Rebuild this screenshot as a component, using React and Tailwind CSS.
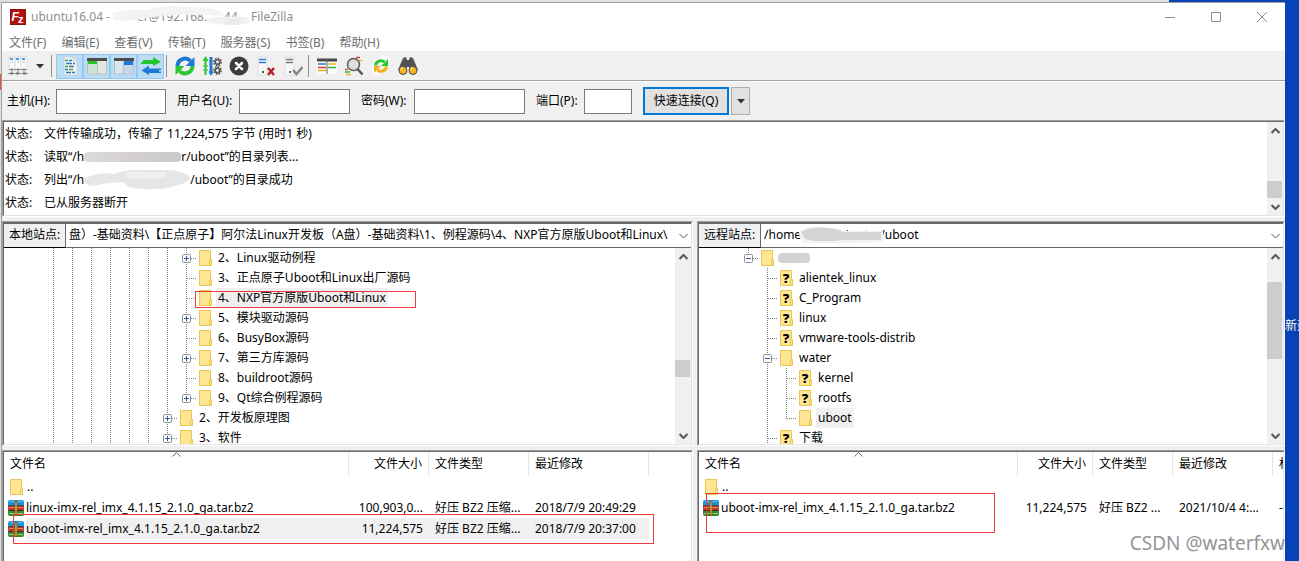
import React from "react";

const menus = ["文件(F)", "编辑(E)", "查看(V)", "传输(T)", "服务器(S)", "书签(B)", "帮助(H)"];

// guides: one letter per indent level, "|" draws a line and "." leaves it blank
const localTree = [
  { guides: "|||||||", node: "plus", label: "2、Linux驱动例程" },
  { guides: "|||||||", node: "tee", label: "3、正点原子Uboot和Linux出厂源码" },
  { guides: "|||||||", node: "tee", label: "4、NXP官方原版Uboot和Linux", selected: true, marked: true },
  { guides: "|||||||", node: "plus", label: "5、模块驱动源码" },
  { guides: "|||||||", node: "tee", label: "6、BusyBox源码" },
  { guides: "|||||||", node: "plus", label: "7、第三方库源码" },
  { guides: "|||||||", node: "tee", label: "8、buildroot源码" },
  { guides: "|||||||", node: "plus", last: true, label: "9、Qt综合例程源码" },
  { guides: "||||||", node: "plus", label: "2、开发板原理图" },
  { guides: "||||||", node: "plus", label: "3、软件" },
];

const remoteTree = [
  { guides: "", node: "minus", last: true, hidden: true },
  { guides: ".", node: "tee", unknown: true, label: "alientek_linux" },
  { guides: ".", node: "tee", unknown: true, label: "C_Program" },
  { guides: ".", node: "tee", unknown: true, label: "linux" },
  { guides: ".", node: "tee", unknown: true, label: "vmware-tools-distrib" },
  { guides: ".", node: "minus", label: "water" },
  { guides: ".|", node: "tee", unknown: true, label: "kernel" },
  { guides: ".|", node: "tee", unknown: true, label: "rootfs" },
  { guides: ".|", node: "tee", last: true, label: "uboot", selected: true },
  { guides: ".", node: "tee", unknown: true, label: "下载" },
];

const localFiles = [
  { name: "linux-imx-rel_imx_4.1.15_2.1.0_ga.tar.bz2", size: "100,903,0...", type: "好压 BZ2 压缩...", date: "2018/7/9 20:49:29" },
  { name: "uboot-imx-rel_imx_4.1.15_2.1.0_ga.tar.bz2", size: "11,224,575", type: "好压 BZ2 压缩...", date: "2018/7/9 20:37:00", selected: true },
];

const remoteFiles = [
  { name: "uboot-imx-rel_imx_4.1.15_2.1.0_ga.tar.bz2", size: "11,224,575", type: "好压 BZ2 ...", date: "2021/10/4 4:...", perm: "-" },
];

const Icon = ({ children }) => (
  <svg width="20" height="20" viewBox="0 0 20 20" fill="none" className="shrink-0" aria-hidden="true">
    {children}
  </svg>
);

const ServersIcon = () => (
  <Icon>
    {[1, 7, 13].map((x) => (
      <g key={x}>
        <rect x={x} y="1" width="6" height="13" fill="#fafafa" stroke="#dcdcdc" />
        <path d={`M${x + 1} 3h3`} stroke="#4f9ae0" strokeWidth="2" />
        <path d={`M${x + 2} 6h2`} stroke="#b5b5b5" />
        <path d={`M${x + 3} 12v5M${x} 13.500h6`} stroke="#8a8a8a" />
      </g>
    ))}
    <path d="M0 17.500h20" stroke="#8a8a8a" />
    <path d="M2 17.500h3M8 17.500h3M15 17.500h3" stroke="#777" strokeWidth="2" />
  </Icon>
);

const LogIcon = () => (
  <Icon>
    <path d="M4 1h9l4 4v14H4z" fill="#eef4f8" stroke="#c9d3da" />
    <path d="M13 1v4h4" stroke="#c9d3da" />
    <path d="M5 4.500h3M5 10.500h3M9 13.500h4" stroke="#2fae49" strokeWidth="1.500" />
    <path d="M9 4.500h3M6 7.500h6M5 13.500h3M6 16.500h5" stroke="#2d78c8" strokeWidth="1.500" />
    <path d="M9 10.500h5M13 7.500h2M12 16.500h3" stroke="#5f6b74" strokeWidth="1.500" />
  </Icon>
);

const LocalPaneIcon = () => (
  <Icon>
    <rect x="0" y="2" width="20" height="16" rx="1" fill="#e3e7e4" />
    <path d="M0 3.500h20" stroke="#4c4c4c" strokeWidth="3" />
    <rect x="0" y="5" width="10" height="3" fill="#27c52c" />
    <rect x="1" y="8" width="9" height="9" fill="#cfe3d2" />
    <path d="M10.500 6v12M.5 5v13h19V5" stroke="#b3c1bb" />
  </Icon>
);

const RemotePaneIcon = () => (
  <Icon>
    <rect x="0" y="2" width="20" height="16" rx="1" fill="#dce6ef" />
    <path d="M0 3.500h20" stroke="#4c4c4c" strokeWidth="3" />
    <rect x="10" y="5" width="10" height="4" fill="#1f7ad6" />
    <rect x="10" y="9" width="9" height="8" fill="#c6d8ea" />
    <path d="M9.500 6v12M.5 5v13h19V5" stroke="#b0bdca" />
  </Icon>
);

const QueueIcon = () => (
  <Icon>
    <path d="M0 4h12V1l8 5-8 4V8H0V6h2V4z" fill="#27c52c" />
    <path d="M20 12.500H8V9.500L.5 14.500 8 19V17h12v-1.500h-2v-1.500h2z" fill="#1f7ad6" />
  </Icon>
);

const RefreshIcon = () => (
  <Icon>
    <path d="M2.500 10A7.500 7.500 0 0 1 15.500 5" stroke="#1f78d1" strokeWidth="4" />
    <path d="M19.500 1v9h-9z" fill="#1f78d1" />
    <path d="M17.500 10A7.500 7.500 0 0 1 4.500 15" stroke="#2bc72f" strokeWidth="4" />
    <path d="M.5 19v-9h9z" fill="#2bc72f" />
  </Icon>
);

const Gear = ({ cx, cy }) => (
  <>
    <circle cx={cx} cy={cy} r="3.500" stroke="#555" strokeWidth="1.800" strokeDasharray="1.600 1.100" />
    <circle cx={cx} cy={cy} r="2.200" stroke="#555" strokeWidth="1.500" />
  </>
);

const ProcessIcon = () => (
  <Icon>
    <path d="M3.500 19V3" stroke="#27c52c" strokeWidth="2" />
    <path d="M.5 5l3-5 3 5z" fill="#27c52c" />
    <path d="M1 10h5M1 14h5" stroke="#27c52c" />
    <path d="M9 1v17" stroke="#1f7ad6" strokeWidth="3" />
    <path d="M6.500 15.500h5L9 20z" fill="#1f7ad6" />
    <Gear cx="15.500" cy="6" />
    <Gear cx="15.500" cy="14.500" />
  </Icon>
);

const CancelIcon = () => (
  <Icon>
    <circle cx="10" cy="10" r="9.500" fill="#3d3d3d" />
    <path d="M7 7l6 6M13 7l-6 6" stroke="#fff" strokeWidth="2.500" strokeLinecap="round" />
  </Icon>
);

const DisconnectIcon = () => (
  <Icon>
    <rect x="2" y="1" width="9" height="18" fill="#f7f7f7" stroke="#dedede" />
    <path d="M3 3.500h7M3 6.500h7" stroke="#2b7cd3" strokeWidth="1.500" />
    <path d="M6 16h2" stroke="#555" strokeWidth="2" />
    <path d="M12 12l6 7M18 12l-6 7" stroke="#b81f26" strokeWidth="2.500" />
  </Icon>
);

const ReconnectIcon = () => (
  <Icon>
    <rect x="2" y="1" width="9" height="18" fill="#f7f7f7" stroke="#dedede" />
    <path d="M3 3.500h7M3 6.500h7" stroke="#777" strokeWidth="1.500" />
    <path d="M6 16h2" stroke="#666" strokeWidth="2" />
    <path d="M10 14l3.500 4 6-7" stroke="#868686" strokeWidth="2.500" />
  </Icon>
);

const CompareIcon = () => (
  <Icon>
    <rect x="0" y="3" width="20" height="15" fill="#fafafa" />
    <path d="M0 4h20" stroke="#484848" strokeWidth="3" />
    <path d="M1 8h8" stroke="#1f7ad6" strokeWidth="1.500" />
    <path d="M11 8h8M1 14.500h8" stroke="#e8b71a" strokeWidth="1.500" />
    <path d="M1 11.500h8" stroke="#d23a33" strokeWidth="1.500" />
    <path d="M11 11.500h8" stroke="#28b53d" strokeWidth="1.500" />
    <path d="M10 3v15" stroke="#666" />
  </Icon>
);

const FilterIcon = () => (
  <Icon>
    <path d="M10 0h8v6M0 12h8v7H0z" fill="#f7f7f7" />
    <path d="M12 1.500h4" stroke="#d23a33" strokeWidth="1.500" />
    <path d="M15 4.500h3M2 18.500h5" stroke="#e8b71a" strokeWidth="1.500" />
    <path d="M1 13.500h3" stroke="#d23a33" strokeWidth="1.500" />
    <path d="M1 16h5" stroke="#28b53d" strokeWidth="1.500" />
    <circle cx="9.500" cy="8.500" r="6" fill="#dadada" fillOpacity=".8" stroke="#5b5b5b" strokeWidth="1.500" />
    <path d="M13.500 13l5 5.500" stroke="#555" strokeWidth="2.500" />
  </Icon>
);

const SyncIcon = () => (
  <Icon>
    <path d="M10 0h9v10h-9zM1 10h9v9H1z" fill="#fafafa" />
    <path d="M4.500 9.500A5.500 5.500 0 0 1 13.500 6" stroke="#2bc72f" strokeWidth="3" />
    <path d="M17 3v7h-7z" fill="#2bc72f" />
    <path d="M15.500 10.500A5.500 5.500 0 0 1 6.500 14" stroke="#f0b21b" strokeWidth="3" />
    <path d="M3 17v-7h7z" fill="#f0b21b" />
  </Icon>
);

const BinocularsIcon = () => (
  <Icon>
    <path d="M5 2l3-1 1 3h2l1-3 3 1 5 12-7 1-2-4H9l-2 4-7-1z" fill="#545454" />
    <circle cx="5" cy="14.500" r="4" fill="#f6b421" stroke="#4b4b4b" />
    <circle cx="15" cy="14.500" r="4" fill="#f6b421" stroke="#4b4b4b" />
    <path d="M3 13.500a2.500 2.500 0 0 1 2-2M13 13.500a2.500 2.500 0 0 1 2-2" stroke="#ffe596" strokeWidth="1.500" />
  </Icon>
);

const FolderIcon = ({ unknown }) => (
  <Icon>
    <path d="M3.500 2.500h11v9h1v6h-12z" fill="#ffe694" stroke="#e9c750" />
    <path d="M13.500 17v-5h2v5z" fill="#ffe694" stroke="#e9c750" />
    {unknown && (
      <text x="9" y="15" textAnchor="middle" fontSize="13" fontWeight="900" fontFamily="Noto Sans, sans-serif" fill="#000">
        ?
      </text>
    )}
  </Icon>
);

const ArchiveIcon = () => (
  <Icon>
    <rect x="2" y="2" width="16" height="6" rx="2" fill="#1c93d8" />
    <path d="M4 3.500h12" stroke="#5cc3f2" />
    <rect x="2" y="7" width="16" height="5" rx="1" fill="#b63a2b" />
    <path d="M2 7.500h16" stroke="#24506e" />
    <path d="M3 9.500h14" stroke="#e98c4c" />
    <rect x="2" y="12" width="16" height="6" rx="2" fill="#2b8a34" />
    <path d="M2 12.500h16" stroke="#5a2417" />
    <path d="M3 15.500h14" stroke="#9bdc57" />
    <path d="M10 3v15" stroke="#7c5a22" strokeWidth="3" />
    <path d="M10 4v13" stroke="#e4b858" />
    <rect x="9" y="8" width="2" height="4" fill="#c9922f" />
  </Icon>
);

const Chevron = ({ down, thin }) => (
  <svg width="9" height="6" viewBox="0 0 9 6" fill="none" aria-hidden="true">
    <path
      d={down ? "M.5 1l4 4 4-4" : "M.5 5l4-4 4 4"}
      stroke="#555"
      strokeWidth={thin ? 1 : 2}
    />
  </svg>
);

const Arrow = () => (
  <svg width="8" height="5" viewBox="0 0 8 5" aria-hidden="true">
    <path d="M0 0h8L4 4.500z" fill="#333" />
  </svg>
);

// Two-tone 3D edge used around every pane; an open one runs on past the window's bottom
const Sunken = ({ open, className = "", children }) => (
  <div
    className={`flex flex-col border-t border-r border-l border-t-[#a0a0a0] border-l-[#a0a0a0] border-r-white border-b-white ${
      open ? "" : "border-b"
    } ${className}`}
  >
    <div
      className={`flex min-h-0 flex-1 flex-col overflow-hidden border-t border-r border-l border-t-[#696969] border-l-[#696969] border-r-[#e3e3e3] border-b-[#e3e3e3] bg-white ${
        open ? "" : "border-b"
      }`}
    >
      {children}
    </div>
  </div>
);

const Scrollbar = ({ before, thumb, after }) => (
  <div className="flex w-4 shrink-0 flex-col bg-[#f0f0f0]">
    <button type="button" aria-label="向上滚动" className="flex h-[17px] shrink-0 items-center justify-center">
      <Chevron />
    </button>
    <div style={{ flexGrow: before }} />
    <div className="mr-px bg-[#cdcdcd]" style={{ height: thumb }} />
    <div style={{ flexGrow: after }} />
    <button type="button" aria-label="向下滚动" className="flex h-[17px] shrink-0 items-center justify-center">
      <Chevron down />
    </button>
  </div>
);

const ToolButton = ({ label, active, children }) => (
  <button
    type="button"
    aria-label={label}
    className={`flex h-[25px] w-[27px] items-center justify-center ${
      active ? "border border-[#90c8f6] bg-[#bcdcf4]" : ""
    }`}
  >
    {children}
  </button>
);

const Separator = () => <div className="mr-1 ml-0.5 h-[22px] w-px bg-[#8c8c8c]" />;

const Guide = ({ line }) => (
  <svg width="19" height="20" viewBox="0 0 19 20" className="shrink-0" aria-hidden="true">
    {line && <path d="M9.500 0v20" stroke="#808080" strokeDasharray="1 1" />}
  </svg>
);

const Node = ({ node, last }) => (
  <svg width="19" height="20" viewBox="0 0 19 20" fill="none" className="shrink-0" aria-hidden="true">
    <path d={last ? "M9.500 0v11" : "M9.500 0v20"} stroke="#808080" strokeDasharray="1 1" />
    <path d="M10 10.500h9" stroke="#808080" strokeDasharray="1 1" />
    {node !== "tee" && (
      <>
        <rect x="5.500" y="6.500" width="8" height="8" rx="1" fill="#fafafa" stroke="#919191" />
        <path d={node === "plus" ? "M7 10.500h5M9.500 8v5" : "M7 10.500h5"} stroke="#3556a5" />
      </>
    )}
  </svg>
);

const Tree = ({ rows, scroll }) => (
  <div className="flex h-[196px]">
    <ul className="min-w-0 flex-1 overflow-hidden pl-10">
      {rows.map((row, i) => (
        <li key={i} className="relative flex h-5 items-center whitespace-nowrap">
          {row.guides.split("").map((g, n) => (
            <Guide key={n} line={g === "|"} />
          ))}
          <Node node={row.node} last={row.last} />
          <FolderIcon unknown={row.unknown} />
          {row.hidden ? (
            <span className="h-2.5 w-8 rounded-sm bg-[#d4d2d4]" />
          ) : (
            <span className={`h-5 px-0.5 leading-5 ${row.selected ? "bg-[#f0f0f0]" : ""}`}>{row.label}</span>
          )}
          {row.marked && (
            <div className="absolute top-[3px] left-[151px] h-[17px] w-[221px] border border-[#ee3a3a]" />
          )}
        </li>
      ))}
    </ul>
    <Scrollbar {...scroll} />
  </div>
);

const SiteRow = ({ id, label, value, children }) => (
  <div className="flex h-[25px] border-t border-[#696969]">
    <label htmlFor={id} className="w-[62px] shrink-0 border-r border-b border-r-[#696969] border-b-black bg-[#f0f0f0] pl-[5px] leading-[22px]">
      {label}
    </label>
    <div className="relative min-w-0 flex-1 border-b border-[#696969]">
      <select id={id} className="h-full w-full appearance-none bg-white pr-4 pb-0.5 pl-[3px] text-xs text-black outline-none">
        <option>{value}</option>
      </select>
      <span className="pointer-events-none absolute top-[9px] right-[3px]">
        <Chevron down thin />
      </span>
      {children}
    </div>
  </div>
);

const HeadCell = ({ className = "", children }) => (
  <th className={`relative h-6 overflow-hidden border-r border-[#e5e5e5] px-1.5 text-left font-normal ${className}`}>
    {children}
  </th>
);

const FileTable = ({ files, name, size, type, date, perm }) => (
  <table className="w-full table-fixed border-separate border-spacing-0 whitespace-nowrap">
    <colgroup>
      <col style={{ width: name }} />
      <col style={{ width: size }} />
      <col style={{ width: type }} />
      <col style={{ width: date }} />
      <col />
    </colgroup>
    <thead>
      <tr>
        <HeadCell>
          文件名
          <svg width="9" height="5" viewBox="0 0 9 5" fill="none" className="absolute top-0 left-1/2 -ml-1" aria-hidden="true">
            <path d="M.5 4.500l4-4 4 4" stroke="#666" />
          </svg>
        </HeadCell>
        <HeadCell className="text-right">文件大小</HeadCell>
        <HeadCell>文件类型</HeadCell>
        <HeadCell>最近修改</HeadCell>
        <th className="h-6 overflow-hidden pl-1.5 text-left font-normal text-clip">{perm}</th>
      </tr>
    </thead>
    <tbody>
      <tr>
        <td className="h-[21px] p-0" colSpan={5}>
          <div className="flex items-center pl-[3px]">
            <FolderIcon />
            ..
          </div>
        </td>
      </tr>
      {files.map((file) => (
        <tr key={file.name}>
          <td className="h-[21px] p-0">
            <div className="flex items-center pl-0.5">
              <ArchiveIcon />
              <span className={`h-[21px] flex-1 leading-[21px] ${file.selected ? "bg-[#f0f0f0]" : ""}`}>{file.name}</span>
            </div>
          </td>
          {[file.size, file.type, file.date].map((value, i) => (
            <td
              key={i}
              className={`overflow-hidden px-1.5 py-0 ${i === 0 ? "text-right" : ""} ${file.selected ? "bg-[#f0f0f0]" : ""}`}
            >
              {value}
            </td>
          ))}
          <td className="overflow-hidden py-0 pr-0 pl-1.5">{file.perm}</td>
        </tr>
      ))}
    </tbody>
  </table>
);

const Field = ({ id, label, labelClass, inputClass }) => (
  <div className="mr-[11px] flex items-center">
    <label htmlFor={id} className={`shrink-0 ${labelClass}`}>{label}</label>
    <input id={id} type="text" className={`h-[25px] border border-[#7a7a7a] bg-white px-1 outline-none ${inputClass}`} />
  </div>
);

const LogRow = ({ children }) => (
  <div className="flex h-[23px] items-center whitespace-nowrap">
    <span className="w-10 shrink-0 pl-px">状态:</span>
    {children}
  </div>
);

const TitleBar = () => (
  <header className="flex h-7 items-center bg-white pl-2 text-[#8e8e8e]">
    <svg width="16" height="16" viewBox="0 0 16 16" aria-hidden="true">
      <rect width="16" height="16" fill="#b3130f" />
      <rect x=".5" y=".5" width="15" height="15" fill="none" stroke="#8f0d0a" />
      <text x="1.500" y="12" fontSize="12" fontWeight="700" fontStyle="italic" fontFamily="Liberation Sans, sans-serif" fill="#fff">F</text>
      <text x="8" y="14" fontSize="11" fontWeight="700" fontFamily="Liberation Sans, sans-serif" fill="#fff">z</text>
    </svg>
    <h1 className="relative ml-[5px] flex whitespace-nowrap">
      <span>ubuntu16.04 -</span>
      <span className="ml-[27px] w-[87px]">er@192.168.</span>
      <span className="w-[27px]">44</span>
      <span>FileZilla</span>
      <svg width="142" height="22" viewBox="0 0 142 22" className="absolute -top-1 left-20" aria-hidden="true">
        <path d="M2 8Q15 3 36 5Q50-1 75 2Q102 1 112 8V11Q90 9 70 10Q50 10 34 13Q10 18 2 14z" fill="#f4f3f4" />
        <path d="M96 13Q115 11 138 12V18Q120 22 98 18z" fill="#f2f2f3" />
        <path d="M114 13h16v7h-16z" fill="#e9ebec" />
      </svg>
    </h1>
    <div className="ml-auto flex h-full">
      {[
        ["最小化", "M0 5.500h10"],
        ["最大化", "M.5.5h9v9h-9z"],
        ["关闭", "M0 0l10 10M10 0L0 10"],
      ].map(([label, d]) => (
        <button key={label} type="button" aria-label={label} className="flex w-[46px] items-center justify-center">
          <svg width="10" height="10" viewBox="0 0 10 10" fill="none" aria-hidden="true">
            <path d={d} stroke="#8c8c8c" />
          </svg>
        </button>
      ))}
    </div>
  </header>
);

const Toolbar = () => (
  <div className="flex h-[31px] items-center border-b border-white bg-[#f0f0f0] shadow-[inset_0_-1px_0_#a0a0a0]">
    <div className="flex items-center pl-0.5">
      <ToolButton label="站点管理器"><ServersIcon /></ToolButton>
      <button type="button" aria-label="打开站点列表" className="flex h-[25px] w-[18px] items-center justify-center">
        <Arrow />
      </button>
      <Separator />
      <ToolButton label="消息日志" active><LogIcon /></ToolButton>
      <ToolButton label="本地目录树" active><LocalPaneIcon /></ToolButton>
      <ToolButton label="远程目录树" active><RemotePaneIcon /></ToolButton>
      <ToolButton label="传输队列" active><QueueIcon /></ToolButton>
      <Separator />
      <ToolButton label="刷新"><RefreshIcon /></ToolButton>
      <ToolButton label="处理队列"><ProcessIcon /></ToolButton>
      <ToolButton label="取消"><CancelIcon /></ToolButton>
      <ToolButton label="断开连接"><DisconnectIcon /></ToolButton>
      <ToolButton label="重新连接"><ReconnectIcon /></ToolButton>
      <Separator />
      <ToolButton label="目录比较"><CompareIcon /></ToolButton>
      <ToolButton label="文件过滤"><FilterIcon /></ToolButton>
      <ToolButton label="同步浏览"><SyncIcon /></ToolButton>
      <ToolButton label="搜索文件"><BinocularsIcon /></ToolButton>
    </div>
  </div>
);

const QuickConnect = () => (
  <form className="flex h-[38px] items-center bg-[#f0f0f0] pl-[5px]" onSubmit={(e) => e.preventDefault()}>
    <Field id="host" label="主机(H):" labelClass="w-[49px]" inputClass="w-[110px]" />
    <Field id="user" label="用户名(U):" labelClass="w-[62px]" inputClass="w-[111px]" />
    <Field id="pass" label="密码(W):" labelClass="w-[53px]" inputClass="w-[111px]" />
    <Field id="port" label="端口(P):" labelClass="w-12" inputClass="w-12" />
    <button type="submit" className="h-7 w-[86px] border-2 border-[#0078d7] bg-[#e1e1e1]">
      快速连接(Q)
    </button>
    <button type="button" aria-label="快速连接历史" className="ml-0.5 flex h-7 w-[19px] items-center justify-center border border-[#adadad] bg-[#e1e1e1]">
      <Arrow />
    </button>
  </form>
);

const App = () => {
  return (
    <div className="flex min-h-screen flex-col overflow-hidden bg-[#0543b6] font-['Noto_Sans','Noto_Sans_CJK_SC',sans-serif] text-xs text-black">
      <div className="h-0.5 w-[90%] bg-[#dfdfdf]" />
      <div className="flex flex-1">
        <div className="flex w-px flex-col bg-[#e0e0e0]">
          <div className="mt-[72px] h-4 bg-[#e2532f]" />
        </div>
        <div className="relative flex min-w-0 flex-1 flex-col border-t border-l border-[#a0a0a0] bg-[#f0f0f0]">
          <TitleBar />
          <nav className="flex h-5 items-end gap-[15px] bg-white pl-[7px] text-[#6d6d6d]">
            {menus.map((menu) => (
              <button key={menu} type="button" className="leading-4 whitespace-nowrap">{menu}</button>
            ))}
          </nav>
          <Toolbar />
          <QuickConnect />

          <Sunken>
            <div className="flex h-[93px]">
              <div className="min-w-0 flex-1 overflow-hidden">
                <LogRow>文件传输成功，传输了 11,224,575 字节 (用时1 秒)</LogRow>
                <LogRow>
                  读取“/h
                  <span className="h-2.5 w-[97px] rounded-sm bg-linear-to-r from-[#dcdadb] via-[#d3cfcf] to-[#c9c8ca]" />
                  r/uboot”的目录列表...
                </LogRow>
                <LogRow>
                  列出“/h
                  <svg width="106" height="22" viewBox="0 0 108 22" preserveAspectRatio="none" aria-hidden="true">
                    <path d="M0 10Q15 2 30 5Q45 0 60 1H90Q104 4 108 8Q108 14 92 17Q80 21 60 20Q44 20 40 13Q20 14 8 17Q0 16 0 10z" fill="#e6e6e8" />
                    <path d="M43 3h40v6H43z" fill="#efeff0" />
                  </svg>
                  /uboot”的目录成功
                </LogRow>
                <LogRow>已从服务器断开</LogRow>
              </div>
              <Scrollbar before={42} thumb={17} after={0} />
            </div>
          </Sunken>

          <div className="mt-1 grid flex-1 grid-cols-[691fr_588fr] gap-1">
            <section className="flex min-w-0 flex-col gap-1">
              <Sunken>
                <SiteRow
                  id="local-site"
                  label="本地站点:"
                  value="盘）-基础资料\【正点原子】阿尔法Linux开发板（A盘）-基础资料\1、例程源码\4、NXP官方原版Uboot和Linux\"
                />
                <Tree rows={localTree} scroll={{ before: 94, thumb: 17, after: 50 }} />
              </Sunken>
              <Sunken open className="relative flex-1">
                <FileTable files={localFiles} name={345} size={80} type={100} date={120} />
                <div className="absolute top-[63px] left-2.5 h-[30px] w-[641px] border border-[#ee3a3a]" />
              </Sunken>
            </section>

            <section className="flex min-w-0 flex-col gap-1">
              <Sunken>
                <SiteRow id="remote-site" label="远程站点:" value="/home/xxxxxx/water/uboot">
                  <svg width="84" height="18" viewBox="0 0 84 18" className="pointer-events-none absolute top-0.5 left-[38px]" aria-hidden="true">
                    <path d="M0 6Q6 0 22 1Q40 2 46 5H84V16Q50 18 4 17Q0 12 0 6z" fill="#f3f3f3" />
                    <path d="M2 6Q12 0 30 2Q40 3 44 6H82V14H44Q20 17 6 13z" fill="#d6d4d6" />
                  </svg>
                </SiteRow>
                <Tree rows={remoteTree} scroll={{ before: 17, thumb: 77, after: 67 }} />
              </Sunken>
              <Sunken open className="relative flex-1">
                <FileTable files={remoteFiles} name={319} size={75} type={80} date={100} perm="权限" />
                <div className="absolute top-[42px] left-2 h-10 w-[289px] border border-[#ee3a3a]" />
              </Sunken>
            </section>
          </div>
          <p className="absolute right-0 bottom-1 text-[19px] leading-7 whitespace-nowrap text-[#959595]">CSDN @waterfxw</p>
        </div>
        <aside className="relative w-3.5 overflow-hidden">
          <span className="absolute top-[316px] left-0 whitespace-nowrap text-white text-shadow-md">新建</span>
        </aside>
      </div>
    </div>
  );
};

export default App;
